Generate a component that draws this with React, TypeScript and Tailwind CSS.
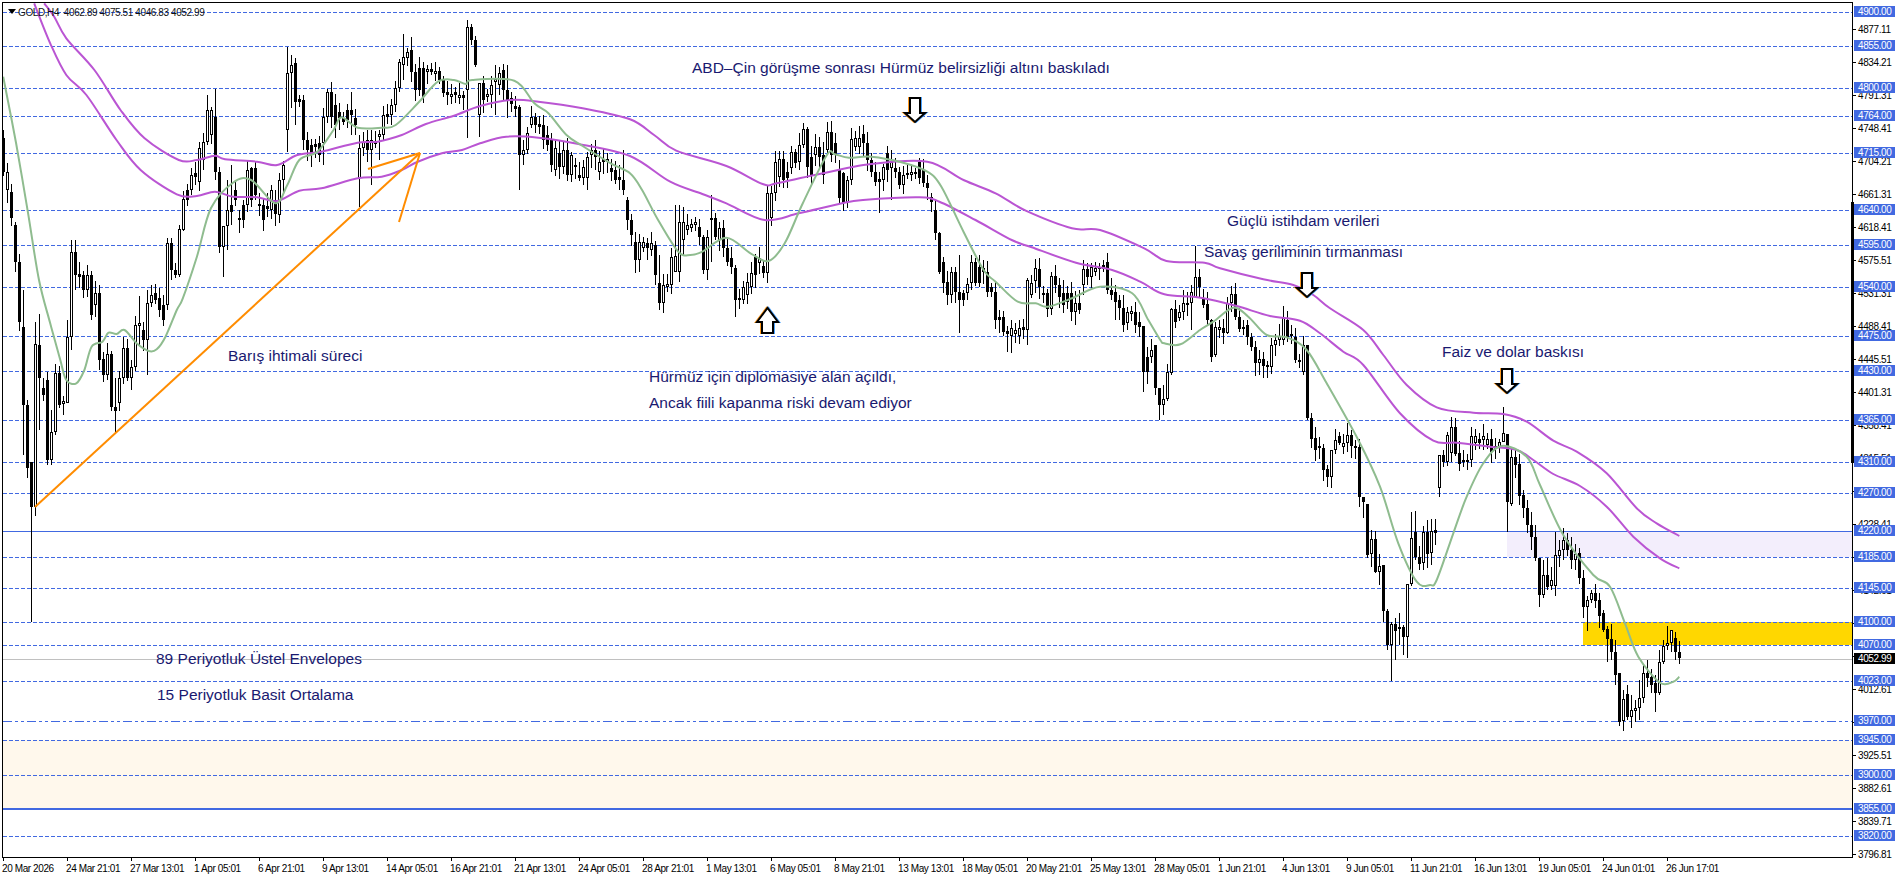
import React from "react";

type Bar = [number, number, number, number];

const BARS: Bar[] = [
[3,138,172,0],[7,172,190,1],[11,192,218,0],[15,225,262,0],[19,262,322,0],[23,327,405,0],[27,405,468,0],[31,462,507,0],[35,344,507,1],[39,345,378,0],[43,388,395,0],[47,380,460,0],[51,432,460,1],[55,373,432,1],[59,373,405,0],[63,401,404,1],[67,337,403,1],[71,252,337,1],[75,252,275,0],[79,274,277,0],[83,275,290,0],[87,275,290,1],[91,275,315,0],[95,293,305,1],[99,293,360,0],[103,359,375,0],[107,354,375,1],[111,354,407,0],[115,407,411,0],[119,378,403,1],[123,348,378,1],[127,348,378,0],[131,367,378,1],[135,325,367,1],[139,323,326,1],[143,330,340,0],[147,303,340,1],[151,295,303,1],[155,293,300,0],[159,298,310,0],[163,305,320,0],[167,243,305,1],[171,243,270,0],[175,270,275,0],[179,229,275,1],[183,199,230,1],[187,190,200,0],[191,175,190,1],[195,173,177,0],[199,148,182,1],[203,142,160,1],[207,110,142,1],[211,110,135,1],[215,117,172,0],[219,172,247,0],[223,226,247,1],[227,210,226,1],[231,205,212,0],[235,190,200,0],[239,218,220,0],[243,205,220,0],[247,170,205,1],[251,168,200,0],[255,168,195,0],[259,204,206,0],[263,205,220,0],[267,206,209,0],[271,190,210,1],[275,200,214,0],[279,180,215,1],[283,165,180,1],[287,73,130,1],[291,65,73,1],[295,63,102,0],[299,99,102,0],[303,100,140,0],[307,140,150,0],[311,145,155,0],[315,144,147,0],[319,143,155,0],[323,117,143,1],[327,92,117,1],[331,92,117,0],[335,105,125,0],[339,112,118,0],[343,118,122,0],[347,110,120,0],[351,110,115,0],[355,118,125,0],[359,148,178,1],[363,142,148,1],[367,140,150,0],[371,140,150,1],[375,141,144,0],[380,134,137,1],[384,115,135,1],[388,114,117,0],[392,105,115,1],[396,88,105,1],[400,62,88,1],[404,57,65,1],[408,52,58,1],[412,50,72,0],[415,72,90,0],[419,68,90,0],[423,68,97,0],[427,69,72,1],[431,69,72,0],[435,71,74,1],[439,71,80,0],[443,80,93,0],[447,92,95,0],[451,94,97,1],[455,92,95,0],[459,95,98,1],[463,95,98,0],[467,27,90,1],[471,27,40,0],[475,40,65,0],[479,83,115,1],[483,83,100,0],[487,94,97,1],[491,85,95,1],[495,79,82,1],[499,73,85,1],[503,70,90,0],[507,90,100,0],[511,98,104,0],[515,106,109,0],[519,107,155,0],[523,150,155,1],[527,133,150,1],[531,117,125,1],[535,117,125,0],[539,124,127,0],[543,125,140,0],[547,135,145,0],[551,140,165,0],[555,148,170,1],[559,153,167,0],[563,150,167,1],[567,150,175,0],[571,155,175,1],[575,165,167,0],[579,175,178,0],[583,167,178,1],[587,157,178,1],[591,150,155,1],[595,150,157,0],[599,162,172,1],[603,159,162,0],[607,159,162,1],[611,168,172,0],[615,170,180,0],[619,177,180,0],[623,180,190,0],[627,200,220,0],
[631,220,235,0],[636,242,260,0],[640,242,260,1],[644,242,248,1],[648,243,248,0],[652,243,250,1],[656,245,275,0],[660,283,303,0],[664,285,303,1],[667,284,287,1],[671,257,285,1],[675,256,272,1],[679,222,272,1],[683,222,240,1],[687,225,230,1],[691,224,228,1],[695,222,225,1],[699,227,237,0],[703,237,270,0],[707,237,270,1],[711,218,220,1],[715,218,237,0],[719,228,240,1],[723,228,248,0],[727,248,262,0],[731,258,267,0],[735,268,300,0],[739,298,300,0],[743,287,300,1],[747,282,295,1],[751,273,287,1],[755,257,275,0],[759,258,263,1],[763,266,273,0],[767,193,273,1],[771,193,218,1],[775,162,193,1],[779,159,177,1],[783,159,180,0],[787,172,178,0],[791,152,168,1],[795,152,163,0],[799,145,162,1],[803,129,145,1],[807,129,167,0],[811,157,175,0],[815,147,155,1],[819,147,157,0],[823,155,175,0],[827,132,150,1],[831,132,155,0],[835,143,155,0],[839,170,198,0],[843,173,203,0],[847,180,203,1],[851,139,180,1],[855,138,147,1],[859,138,147,1],[863,134,143,0],[867,143,160,0],[871,160,172,0],[876,172,182,0],[880,179,182,0],[884,167,180,1],[888,153,170,0],[892,162,168,1],[896,168,172,0],[900,172,185,0],[904,175,185,1],[908,173,175,1],[912,172,175,1],[916,172,174,0],[920,162,178,0],[924,170,183,0],[928,183,188,0],[932,197,202,0],[936,210,233,0],[940,233,272,0],[944,262,283,0],[948,282,295,0],[952,272,295,1],[956,272,292,0],[960,292,300,0],[964,293,300,0],[968,284,293,1],[972,262,283,1],[976,262,283,0],[980,267,283,0],[984,268,272,1],[988,272,292,0],[992,287,292,0],
[996,292,320,0],[1000,317,320,0],[1004,317,332,0],[1008,331,334,0],[1012,328,336,1],[1017,328,336,1],[1021,327,330,0],[1025,280,330,1],[1029,283,295,1],[1033,268,281,1],[1037,269,287,0],[1041,293,295,0],[1045,293,309,0],[1049,276,309,1],[1053,276,285,0],[1057,285,297,0],[1061,293,305,0],[1065,293,302,0],[1069,293,312,0],[1073,303,312,1],[1077,303,310,0],[1081,269,285,1],[1085,269,277,0],[1089,267,277,1],[1093,268,272,1],[1097,267,269,0],[1101,265,269,0],[1105,262,290,0],[1109,290,295,0],[1113,292,302,0],[1117,300,308,0],[1121,308,325,0],[1125,312,323,1],[1129,311,314,1],[1133,312,325,0],[1137,322,327,0],[1141,326,372,0],[1145,357,372,0],[1149,350,357,1],[1153,345,388,0],[1157,388,405,0],[1161,399,405,1],[1165,372,399,1],[1169,309,373,1],[1173,309,322,0],[1177,312,318,1],[1181,303,312,1],[1185,303,305,1],[1189,292,303,1],[1193,277,297,1],[1197,277,287,0],[1201,287,298,0],
[1203,298,305,0],[1207,304,320,0],[1212,320,357,0],[1215,327,355,1],[1219,327,330,1],[1223,328,333,0],[1227,303,333,1],[1231,294,303,1],[1235,294,317,0],[1239,317,329,0],[1243,327,329,0],[1247,325,337,0],[1251,337,347,0],[1255,347,363,0],[1259,359,363,1],[1263,359,366,0],[1267,365,367,0],[1271,345,367,1],[1275,340,345,1],[1279,336,340,1],[1283,318,340,1],[1287,320,337,0],[1291,334,336,0],[1295,337,360,0],[1299,360,362,0],[1303,345,372,1],[1307,345,418,0],[1311,418,439,0],[1315,438,450,0],[1319,446,448,0],[1323,448,470,0],[1327,469,477,0],
[1331,450,477,1],[1335,440,450,1],[1339,436,443,0],[1343,443,447,1],[1347,435,443,1],[1351,435,446,0],[1355,446,447,0],[1359,447,497,0],[1363,497,502,0],[1367,504,555,0],[1371,539,554,1],[1375,539,572,0],[1379,566,572,1],[1383,565,611,0],[1387,611,645,0],[1391,624,645,1],[1395,624,631,0],[1399,627,629,1],[1403,627,637,0],[1407,584,637,1],[1411,538,584,1],[1415,532,557,0],[1419,557,564,0],[1423,532,563,1],[1427,532,554,0],[1431,531,553,1],[1435,530,533,0],[1439,455,488,1],[1443,455,462,0],[1447,435,462,1],[1451,427,453,1],[1455,427,454,0],[1459,453,464,0],[1463,460,462,0],[1467,460,461,0],[1471,436,460,1],[1475,436,443,1],[1479,439,443,0],[1483,436,440,1],[1487,439,445,1],[1491,439,452,0],[1495,446,449,0],[1499,442,447,1],[1503,433,442,1],[1507,434,502,0],[1511,457,504,1],[1515,457,465,0],[1519,464,496,0],[1523,495,508,0],[1527,508,525,0],[1531,525,537,0],[1535,537,558,0],[1539,558,595,0],[1543,575,595,1],[1547,575,587,0],[1551,580,586,1],[1555,555,586,1],[1559,550,556,1],[1563,540,550,1],[1567,540,550,0],[1571,550,560,0],[1575,554,560,1],[1579,553,578,0],[1583,578,607,0],[1587,600,607,1],[1591,593,600,1],[1595,593,601,0],[1599,600,616,0],[1603,613,630,0],[1607,629,639,0],[1611,639,652,0],[1615,652,675,0],[1619,673,722,0],[1623,699,721,1],[1627,694,717,0],[1631,710,717,1],[1635,708,711,1],[1639,698,708,1],[1643,673,698,1],[1647,673,678,0],[1651,677,685,0],[1655,683,693,0],[1659,662,693,1],[1663,646,662,1],[1667,643,646,1],[1671,630,643,1],[1675,638,652,0],[1679,652,658,0],
];

const WICKS: Record<number, [number, number]> = {
  23: [290, 455], 27: [400, 478], 31: [462, 622], 35: [322, 516], 39: [314, 430], 47: [372, 465], 51: [410, 465],
  67: [320, 403], 71: [240, 350], 75: [240, 290], 99: [285, 370], 115: [378, 432], 139: [296, 345], 147: [290, 375],
  207: [95, 145], 215: [89, 180], 223: [226, 277], 227: [180, 250], 231: [165, 225], 287: [47, 152], 291: [55, 108], 295: [58, 125],
  303: [95, 150], 323: [108, 165], 351: [92, 135], 359: [135, 207], 371: [130, 185], 380: [130, 160], 404: [34, 80], 467: [20, 138],
  471: [24, 45], 475: [36, 67], 479: [83, 137], 495: [65, 115], 507: [65, 118], 519: [105, 190],
  623: [150, 195], 660: [255, 310], 675: [205, 250], 683: [207, 255], 679: [205, 282], 711: [195, 262], 735: [265, 317], 736: [265, 317],
  880: [172, 213], 892: [150, 200], 960: [255, 333], 975: [250, 300], 983: [250, 290], 1025: [278, 345], 1008: [326, 352], 1012: [320, 353],
  1113: [285, 320], 1117: [295, 320], 1141: [326, 392], 1153: [345, 395], 1157: [388, 420], 1161: [385, 415], 1169: [308, 375],
  1193: [246, 297], 1189: [285, 330], 1231: [286, 312], 1247: [320, 345], 1283: [306, 345], 1307: [345, 420], 1331: [450, 488],
  1339: [432, 445], 1363: [497, 518], 1367: [504, 558], 1371: [530, 567], 1383: [565, 622], 1387: [609, 650], 1391: [622, 681], 1395: [618, 660], 1399: [613, 645],
  1403: [625, 655], 1407: [584, 658], 1411: [512, 586], 1415: [511, 560], 1423: [526, 570], 1427: [520, 568], 1431: [519, 565], 1435: [519, 545],
  1439: [455, 497], 1451: [417, 462], 1455: [418, 456], 1503: [407, 442], 1507: [434, 532], 1511: [447, 506], 1539: [558, 607], 1543: [560, 598], 1547: [558, 590],
  1555: [532, 596], 1587: [596, 631], 1591: [590, 603], 1603: [610, 632], 1607: [626, 662], 1611: [624, 660], 1619: [673, 726], 1623: [690, 731], 1627: [685, 720],
  1631: [695, 728], 1635: [700, 722], 1639: [680, 720], 1655: [675, 712], 1659: [650, 695], 1663: [640, 664], 1667: [626, 650], 1671: [630, 652], 1675: [632, 660], 1679: [641, 664],
};

function buildCandles() {
  const slots: (Bar | null)[] = Array(420).fill(null);
  BARS.forEach((b) => {
    const i = Math.max(0, Math.min(419, Math.round((b[0] - 3) / 4)));
    slots[i] = b;
  });
  let seed = 12345;
  const rnd = () => {
    seed = (seed * 1103515245 + 12345) & 0x7fffffff;
    return seed / 0x7fffffff;
  };
  return slots.map((b, i) => {
    const x = 3 + 4 * i;
    let top: number, bot: number, w: number;
    if (b) {
      top = b[1];
      bot = b[2];
      w = b[3];
    } else {
      let p = i - 1;
      while (p >= 0 && !slots[p]) p--;
      let n = i + 1;
      while (n < 420 && !slots[n]) n++;
      const a = p >= 0 ? slots[p]! : slots[n]!;
      const c = n < 420 ? slots[n]! : a;
      const m = (a[1] + a[2] + c[1] + c[2]) / 4;
      top = Math.round(m - 2);
      bot = top + 4;
      w = i % 2;
    }
    const key = b ? b[0] : x;
    const ov = WICKS[key];
    const bodyH = bot - top;
    const hi = ov ? Math.min(ov[0], top) : top - Math.round((bodyH > 25 ? 1 : 3) + rnd() * 10);
    const lo = ov ? Math.max(ov[1], bot) : bot + Math.round((bodyH > 25 ? 1 : 3) + rnd() * 10);
    return { x, top, bot, w, hi, lo };
  });
}

const CANDLES = buildCandles();

type P = [number, number];
const z = (ox: number, oy: number, fx: number, pts: number[]): P[] => {
  const out: P[] = [];
  for (let i = 0; i < pts.length; i += 2) out.push([ox + pts[i] / fx, oy + pts[i + 1] / 3]);
  return out;
};
const W = 2.489;
const UPPER: P[] = [
  ...z(0, 0, W, [110,10,135,50,165,115,235,210,300,330,360,415,445,480,490,480,535,467,560,478,640,485,690,495,740,465,800,455,890,428,940,425,1000,405,1060,372,1130,347,1195,318,1270,300,1340,305,1450,325,1568,358]),
  ...z(630, 40, W, [60,285,115,332,240,378,330,432,365,430,460,405,600,372,740,365,830,420,910,460,985,512,1100,565,1170,570,1280,625,1335,663,1430,668]),
  ...z(1200, 200, 3, [60,205,190,238,280,255,340,285,390,325,490,390,550,465,620,555]),
  ...z(1330, 400, 3, [320,22,430,38,520,42,590,65,670,122,740,155,830,220,920,325,980,370,1048,408]),
];
const LOWER: P[] = [
  ...z(0, 0, W, [85,10,125,130,165,225,215,285,290,420,350,510,440,583,490,588,535,575,580,590,640,592,690,603,745,572,800,565,890,535,950,530,1000,510,1040,485,1100,460,1150,450,1195,430,1260,410,1340,413,1440,432,1568,468]),
  ...z(630, 40, W, [100,425,180,462,240,490,335,540,420,520,520,492,580,480,720,472,770,485,860,540,950,600,1000,622,1110,668,1200,690,1270,725,1330,763,1420,773]),
  ...z(1200, 200, 3, [110,318,210,348,300,362,360,400,430,455,490,495,600,640,700,722]),
  ...z(1330, 400, 3, [380,128,480,140,560,150,610,180,670,222,750,258,830,320,910,410,990,475,1048,505]),
];
const GREEN: P[] = [
  ...z(0, 0, W, [8,230,40,430,70,640,97,840]),
  ...z(0, 280, W, [125,130,150,240,165,300,190,310,210,270,228,200,255,185,270,158,290,162,310,150,340,190,370,213,390,208,412,170,440,90]),
  ...z(0, 0, W, [455,895,490,770,525,625,580,548,625,540,685,610,715,555,745,480,790,455,830,390,850,352,890,383,950,383,985,375,1040,310,1090,245,1130,240,1160,252,1175,240,1280,242,1330,310,1365,340,1410,405,1450,438,1520,490]),
  ...z(630, 40, W, [0,400,30,450,70,540,120,635,150,645,180,635,240,593,300,640,345,663,385,610,430,490,490,345,510,343,545,353,600,350,680,368,740,395,775,440,830,575,880,690,910,725,965,785,1010,790,1040,800,1100,775,1170,740,1250,760,1290,840,1320,900]),
  ...z(630, 260, W, [1330,250,1370,253]),
  ...z(1200, 200, 3, [0,390,40,365,100,323,145,350,200,405,260,412,320,450,380,550]),
  ...z(1330, 400, 3, [85,120,150,260,205,430,260,545,300,555,320,540,370,400,410,290,460,190,515,138,590,170,630,255,700,405,790,525,840,560,885,670,925,770,990,848,1030,845,1048,830]),
];
// Catmull-Rom through the traced points, so the indicator curves come out smooth.
const curve = (a: P[]) => {
  let d = `M${a[0][0].toFixed(1)} ${a[0][1].toFixed(1)}`;
  for (let i = 0; i < a.length - 1; i++) {
    const p0 = a[Math.max(0, i - 1)];
    const p1 = a[i];
    const p2 = a[i + 1];
    const p3 = a[Math.min(a.length - 1, i + 2)];
    const c1 = [p1[0] + (p2[0] - p0[0]) / 6, p1[1] + (p2[1] - p0[1]) / 6];
    const c2 = [p2[0] - (p3[0] - p1[0]) / 6, p2[1] - (p3[1] - p1[1]) / 6];
    d += `C${c1[0].toFixed(1)} ${c1[1].toFixed(1)} ${c2[0].toFixed(1)} ${c2[1].toFixed(1)} ${p2[0].toFixed(1)} ${p2[1].toFixed(1)}`;
  }
  return d;
};

const LEVELS: [string, number][] = [
  ["4900.00",12],["4855.00",46],["4800.00",88],["4764.00",116],["4715.00",153],["4640.00",210],["4595.00",245],["4540.00",287],["4475.00",336],["4430.00",371],["4365.00",420],["4310.00",462],["4270.00",493],["4220.00",531],["4185.00",557],["4145.00",588],["4100.00",622],["4070.00",645],["4023.00",681],["3970.00",721],["3945.00",740],["3900.00",775],["3855.00",809],["3820.00",836],
];
const TICKS: string[] = [
  "4877.11","4834.21","4791.31","4748.41","4704.21","4661.31","4618.41","4575.51","4531.31","4488.41","4445.51","4401.31","4358.41","4315.51","4271.31","4228.41","","4142.61","","","4012.61","","3925.51","3882.61","3839.71","3796.81",
];
const DATES = ["20 Mar 2026","24 Mar 21:01","27 Mar 13:01","1 Apr 05:01","6 Apr 21:01","9 Apr 13:01","14 Apr 05:01","16 Apr 21:01","21 Apr 13:01","24 Apr 05:01","28 Apr 21:01","1 May 13:01","6 May 05:01","8 May 21:01","13 May 13:01","18 May 05:01","20 May 21:01","25 May 13:01","28 May 05:01","1 Jun 21:01","4 Jun 13:01","9 Jun 05:01","11 Jun 21:01","16 Jun 13:01","19 Jun 05:01","24 Jun 01:01","26 Jun 17:01"];

const Arrow = ({ d }: { d: string }) => (
  <g fill="none" strokeLinejoin="miter">
    <path d={d} stroke="#ff9a1f" strokeWidth={2} transform="translate(-1 0)" />
    <path d={d} stroke="#4aa3ff" strokeWidth={2} transform="translate(1 0)" />
    <path d={d} stroke="#000" strokeWidth={2} fill="#fff" />
  </g>
);
const down = (x: number, t: number, s: number, tip: number) =>
  `M${x - 5} ${t}H${x + 5}V${s}H${x + 10}L${x} ${tip}L${x - 10} ${s}H${x - 5}Z`;

const Note = ({ className, children }: { className: string; children: React.ReactNode }) => (
  <span className={`absolute whitespace-nowrap text-[15.5px] leading-[18px] text-[#191970] ${className}`}>{children}</span>
);

export default function App() {
  const dashed = LEVELS.filter((l) => !["4220.00", "3855.00", "3970.00"].includes(l[0]));
  return (
    <div className="w-[1898px] h-[878px] overflow-hidden bg-white pt-[2px] pl-[2px] font-['Liberation_Sans',Arial,sans-serif] text-black">
      <div className="flex h-[856px]">
        <div className="relative w-[1851px] h-[856px] border border-black overflow-hidden shrink-0">
          <svg width={1849} height={854} viewBox="3 3 1849 854" className="block">
            <rect x={1507} y={531} width={345} height={26} fill="#f3eefc" />
            <rect x={1583} y={622} width={269} height={23} fill="#ffd700" />
            <rect x={3} y={740} width={1849} height={69} fill="#fff8ec" />
            <g shapeRendering="crispEdges">
              {dashed.map(([l, y]) => (
                <line key={l} x1={3} x2={1852} y1={y + 0.5} y2={y + 0.5} stroke="#4169e1" strokeDasharray="4 2" />
              ))}
              <line x1={3} x2={1852} y1={721.5} y2={721.5} stroke="#4169e1" strokeDasharray="9 3 3 3 3 3" />
              <line x1={3} x2={1852} y1={531.5} y2={531.5} stroke="#4169e1" />
              <line x1={3} x2={1852} y1={809} y2={809} stroke="#4169e1" strokeWidth={2} />
              <line x1={3} x2={1852} y1={659.5} y2={659.5} stroke="#c0c0c0" />
              {CANDLES.map((c) => (
                <g key={c.x}>
                  <rect x={c.x} y={c.hi} width={1} height={c.lo - c.hi} fill="#000" />
                  {c.w ? (
                    <rect x={c.x - 0.5} y={c.top + 0.5} width={2} height={Math.max(c.bot - c.top - 1, 1)} fill="#fff" stroke="#000" />
                  ) : (
                    <rect x={c.x - 1} y={c.top} width={3} height={Math.max(c.bot - c.top, 2)} fill="#000" />
                  )}
                </g>
              ))}
            </g>
            <g fill="none" strokeWidth={2}>
              <path d={curve(UPPER)} stroke="#ba55d3" />
              <path d={curve(LOWER)} stroke="#ba55d3" />
              <path d={curve(GREEN)} stroke="#8fbc8f" />
            </g>
            <g stroke="#ff8c00" strokeWidth={2} fill="none">
              <line x1={35} y1={507} x2={420} y2={153} />
              <line x1={368} y1={169} x2={420} y2={153} />
              <line x1={399} y1={222} x2={420} y2={153} />
            </g>
            <Arrow d="M762 333H773V322H778L767.5 308L757 322H762Z" />
            <Arrow d={down(915, 98, 113, 122)} />
            <Arrow d={down(1307, 273, 288, 297)} />
            <Arrow d={down(1507, 369, 384, 393)} />
          </svg>
          <div className="absolute left-[5px] top-[6px] w-0 h-0 border-x-[4px] border-x-transparent border-t-[5px] border-t-black" />
          <span className="absolute left-[15px] top-[3px] whitespace-pre text-[10px] leading-[13px] tracking-[-0.4px] text-[#111]">GOLD,H4  4062.89 4075.51 4046.83 4052.99</span>
          <Note className="left-[689px] top-[56px]">ABD–Çin görüşme sonrası Hürmüz belirsizliği altını baskıladı</Note>
          <Note className="left-[1224px] top-[209px]">Güçlü istihdam verileri</Note>
          <Note className="left-[1201px] top-[240px]">Savaş geriliminin tırmanması</Note>
          <Note className="left-[1439px] top-[340px]">Faiz ve dolar baskısı</Note>
          <Note className="left-[225px] top-[344px]">Barış ihtimali süreci</Note>
          <Note className="left-[646px] top-[365px]">Hürmüz için diplomasiye alan açıldı,</Note>
          <Note className="left-[646px] top-[391px]">Ancak fiili kapanma riski devam ediyor</Note>
          <Note className="left-[153px] top-[647px]">89 Periyotluk Üstel Envelopes</Note>
          <Note className="left-[154px] top-[683px]">15 Periyotluk Basit Ortalama</Note>
        </div>
        <div className="relative w-[45px] h-[856px] shrink-0 text-[10px] leading-[11px] tracking-[-0.4px]">
          <div className="flex flex-col pt-[22px]">
            {TICKS.map((t, i) => (
              <div key={i} className="flex h-[33px] shrink-0 gap-[2px]">
                <div className="w-[3px] h-px mt-[5px] bg-black shrink-0" />
                <span className="whitespace-nowrap">{t}</span>
              </div>
            ))}
          </div>
          <div className="absolute -left-[2px] top-[200px] w-[3px] h-[261px] bg-black" />
          {LEVELS.map(([l, y]) => (
            <span key={l} className="absolute left-[1px] w-[41px] h-[11px] bg-[#4169e1] pl-[4px] text-white" style={{ top: y - 8 }}>{l}</span>
          ))}
          <span className="absolute left-[1px] top-[651px] w-[41px] h-[11px] bg-black pl-[4px] text-white">4052.99</span>
        </div>
      </div>
      <div className="flex text-[10px] leading-[13px] tracking-[-0.4px]">
        {DATES.map((d) => (
          <div key={d} className="w-16 shrink-0">
            <div className="ml-px w-px h-[3px] bg-black" />
            <span className="block whitespace-nowrap mt-px">{d}</span>
          </div>
        ))}
      </div>
    </div>
  );
}
